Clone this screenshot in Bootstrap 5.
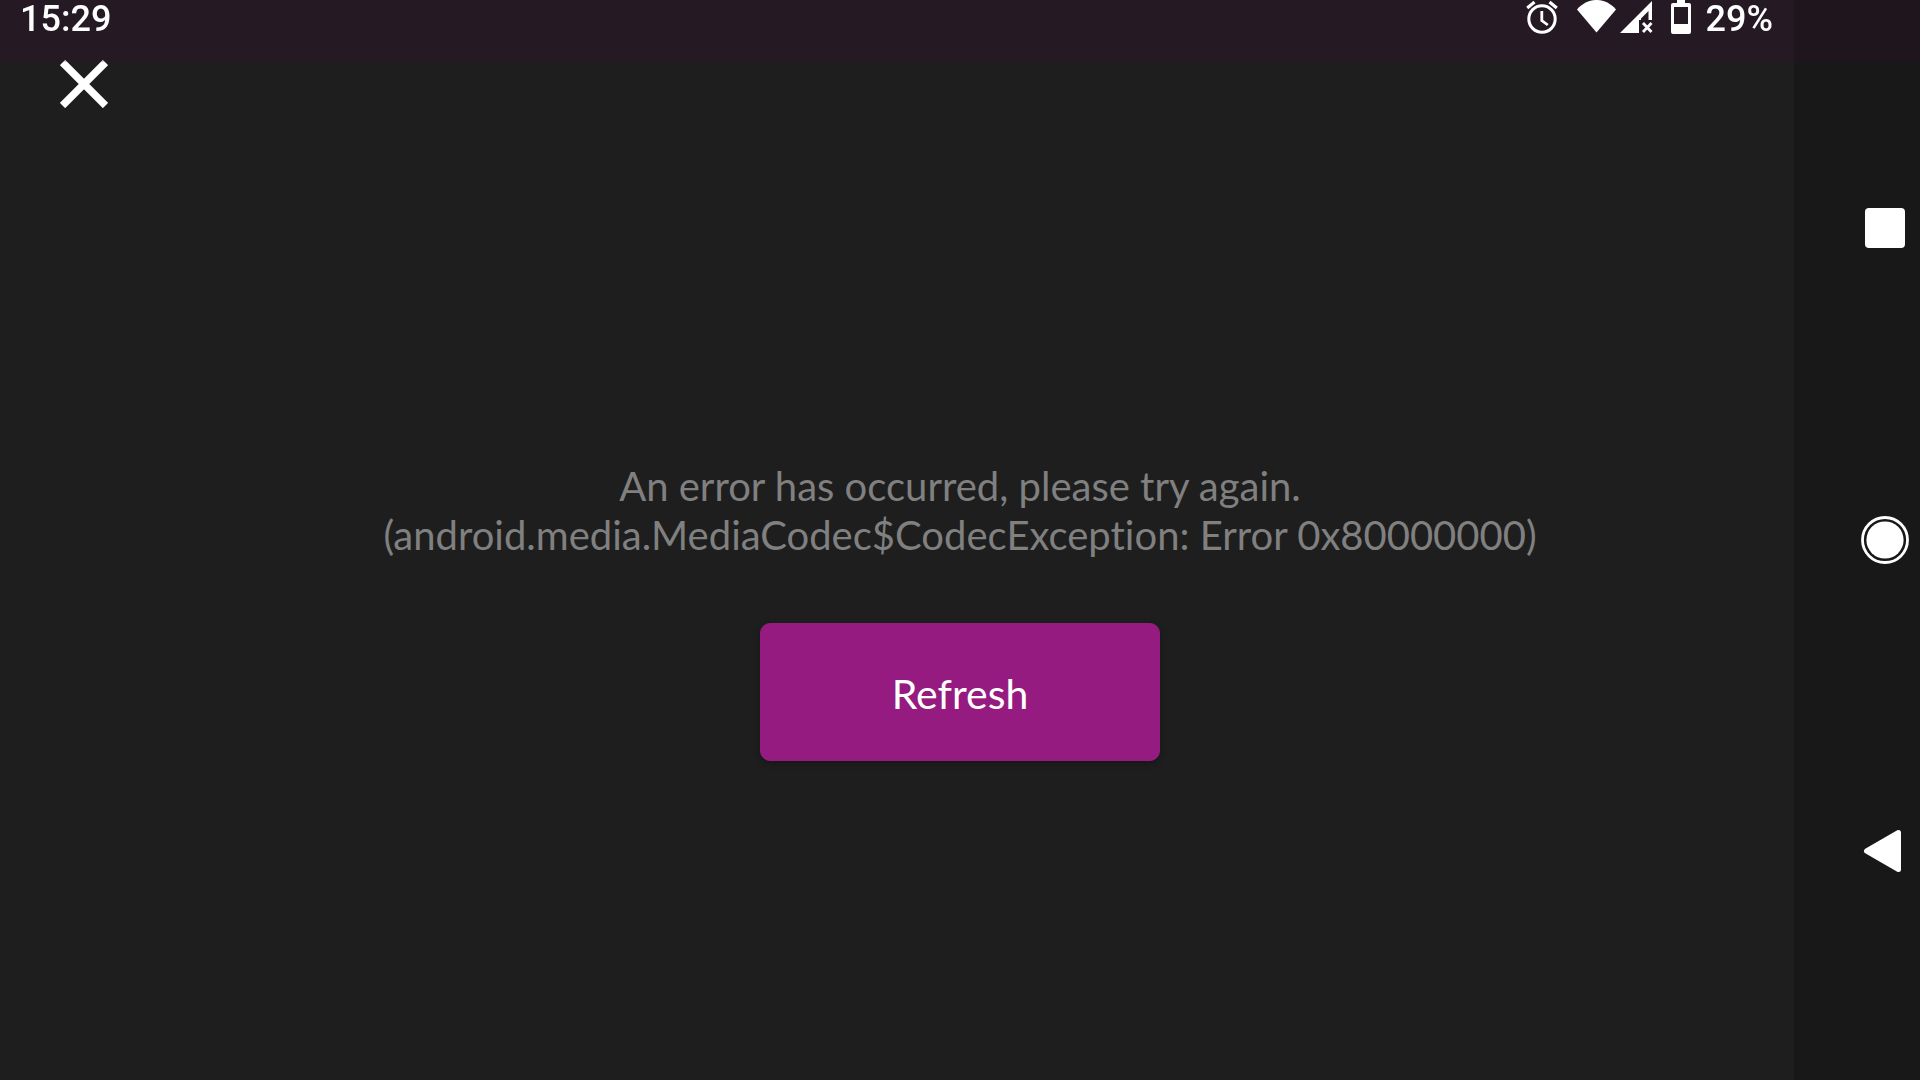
<!DOCTYPE html>
<html lang="en">
<head>
<meta charset="utf-8">
<meta name="viewport" content="width=device-width, initial-scale=1">
<title>Playback error</title>
<link href="https://cdn.jsdelivr.net/npm/bootstrap@5.3.0/dist/css/bootstrap.min.css" rel="stylesheet">
<style>
  body { background: #1e1e1e; color: #fff; font-family: Lato, "Open Sans", sans-serif; }
  .player-toolbar { padding: 60px 60px 35px; }
  .icon-btn { width: 48px; height: 48px; line-height: 0; }
  .message { color: #808080; font-size: 40px; line-height: 49px; margin-bottom: 63px; font-variant-ligatures: none; }
  .btn-refresh { --bs-btn-color: #fff; --bs-btn-bg: #951b81; --bs-btn-border-color: #951b81;
    --bs-btn-hover-color: #fff; --bs-btn-hover-bg: #a52490; --bs-btn-active-bg: #7d146c;
    --bs-btn-border-radius: 10px; width: 400px; max-width: 100%; height: 138px; padding: 4px 12px 0;
    font-size: 41px; box-shadow: 0 2px 6px rgba(0, 0, 0, .3); }
  .status-bar { height: 62px; padding: 0 147px 0 20px; background: rgba(65, 10, 55, .2);
    font-family: Roboto, sans-serif; font-size: 36px; font-weight: 500; line-height: 38px; }
  .status-icons { gap: 6px; }
  .nav-rail { width: 126px; padding: 204px 11px; background: rgba(0, 0, 0, .17); }
</style>
</head>
<body>
<div class="d-flex flex-column min-vh-100">
  <header class="player-toolbar d-flex">
    <button type="button" class="icon-btn btn p-0 border-0" aria-label="Close">
      <svg width="48" height="48" viewBox="0 0 48 48"><path d="M2.500 2.500 45.500 45.500M45.500 2.500 2.500 45.500" stroke="#fff" stroke-width="7.500"/></svg>
    </button>
  </header>
  <main class="flex-grow-1 d-flex flex-column align-items-center justify-content-center text-center">
    <p class="message">An error has occurred, please try again.<br>(android.media.MediaCodec$CodecException: Error 0x80000000)</p>
    <button type="button" class="btn btn-refresh">Refresh</button>
  </main>
</div>

<div class="status-bar fixed-top d-flex justify-content-between align-items-start">
  <span>15:29</span>
  <div class="status-icons d-flex">
    <svg width="174" height="36" viewBox="0 0 174 36" fill="#fff" aria-hidden="true">
      <!-- alarm -->
      <g fill="none" stroke="#fff"><circle cx="16" cy="19" r="13.200" stroke-width="3"/><path d="M15.800 11v9.500l6 4.500" stroke-width="2.800"/><path d="M1.200 8 8.500 2M23.500 2l7.300 6" stroke-width="3.200"/></g>
      <!-- wifi -->
      <path d="M51 9.500C62-3.200 79-3.200 90 9.500L70.500 32.500Z"/>
      <!-- mobile signal -->
      <path fill-rule="evenodd" d="M94 33 126 1V20H113V33ZM115 18.500V20H122.500V11Z"/>
      <path d="m117 23 8.500 9M125.500 23l-8.500 9" stroke="#fff" stroke-width="2.800"/>
      <!-- battery -->
      <path fill-rule="evenodd" d="M151 0h8v3h4q2 0 2 2v27q0 2-2 2h-16q-2 0-2-2V5q0-2 2-2h4ZM148 7v17h14V7Z"/>
    </svg>
    <span>29%</span>
  </div>
</div>

<nav class="nav-rail position-fixed top-0 end-0 h-100 d-flex flex-column justify-content-between align-items-end" style="z-index:1040" aria-label="System">
  <button type="button" class="icon-btn btn p-0 border-0" aria-label="Overview">
    <svg width="48" height="48" viewBox="0 0 48 48"><rect x="4" y="4" width="40" height="40" rx="4" fill="#fff"/></svg>
  </button>
  <button type="button" class="icon-btn btn p-0 border-0" aria-label="Home">
    <svg width="48" height="48" viewBox="0 0 48 48"><circle cx="24" cy="24" r="18.600" fill="#fff"/><circle cx="24" cy="24" r="22.500" fill="none" stroke="#fff" stroke-width="2.800"/></svg>
  </button>
  <button type="button" class="icon-btn btn p-0 border-0" aria-label="Back">
    <svg width="48" height="48" viewBox="0 0 48 48"><path d="M5.500 23 37.500 4.500V41.500Z" fill="#fff" stroke="#fff" stroke-width="5" stroke-linejoin="round"/></svg>
  </button>
</nav>
<script src="https://cdn.jsdelivr.net/npm/bootstrap@5.3.0/dist/js/bootstrap.bundle.min.js"></script>
</body>
</html>
